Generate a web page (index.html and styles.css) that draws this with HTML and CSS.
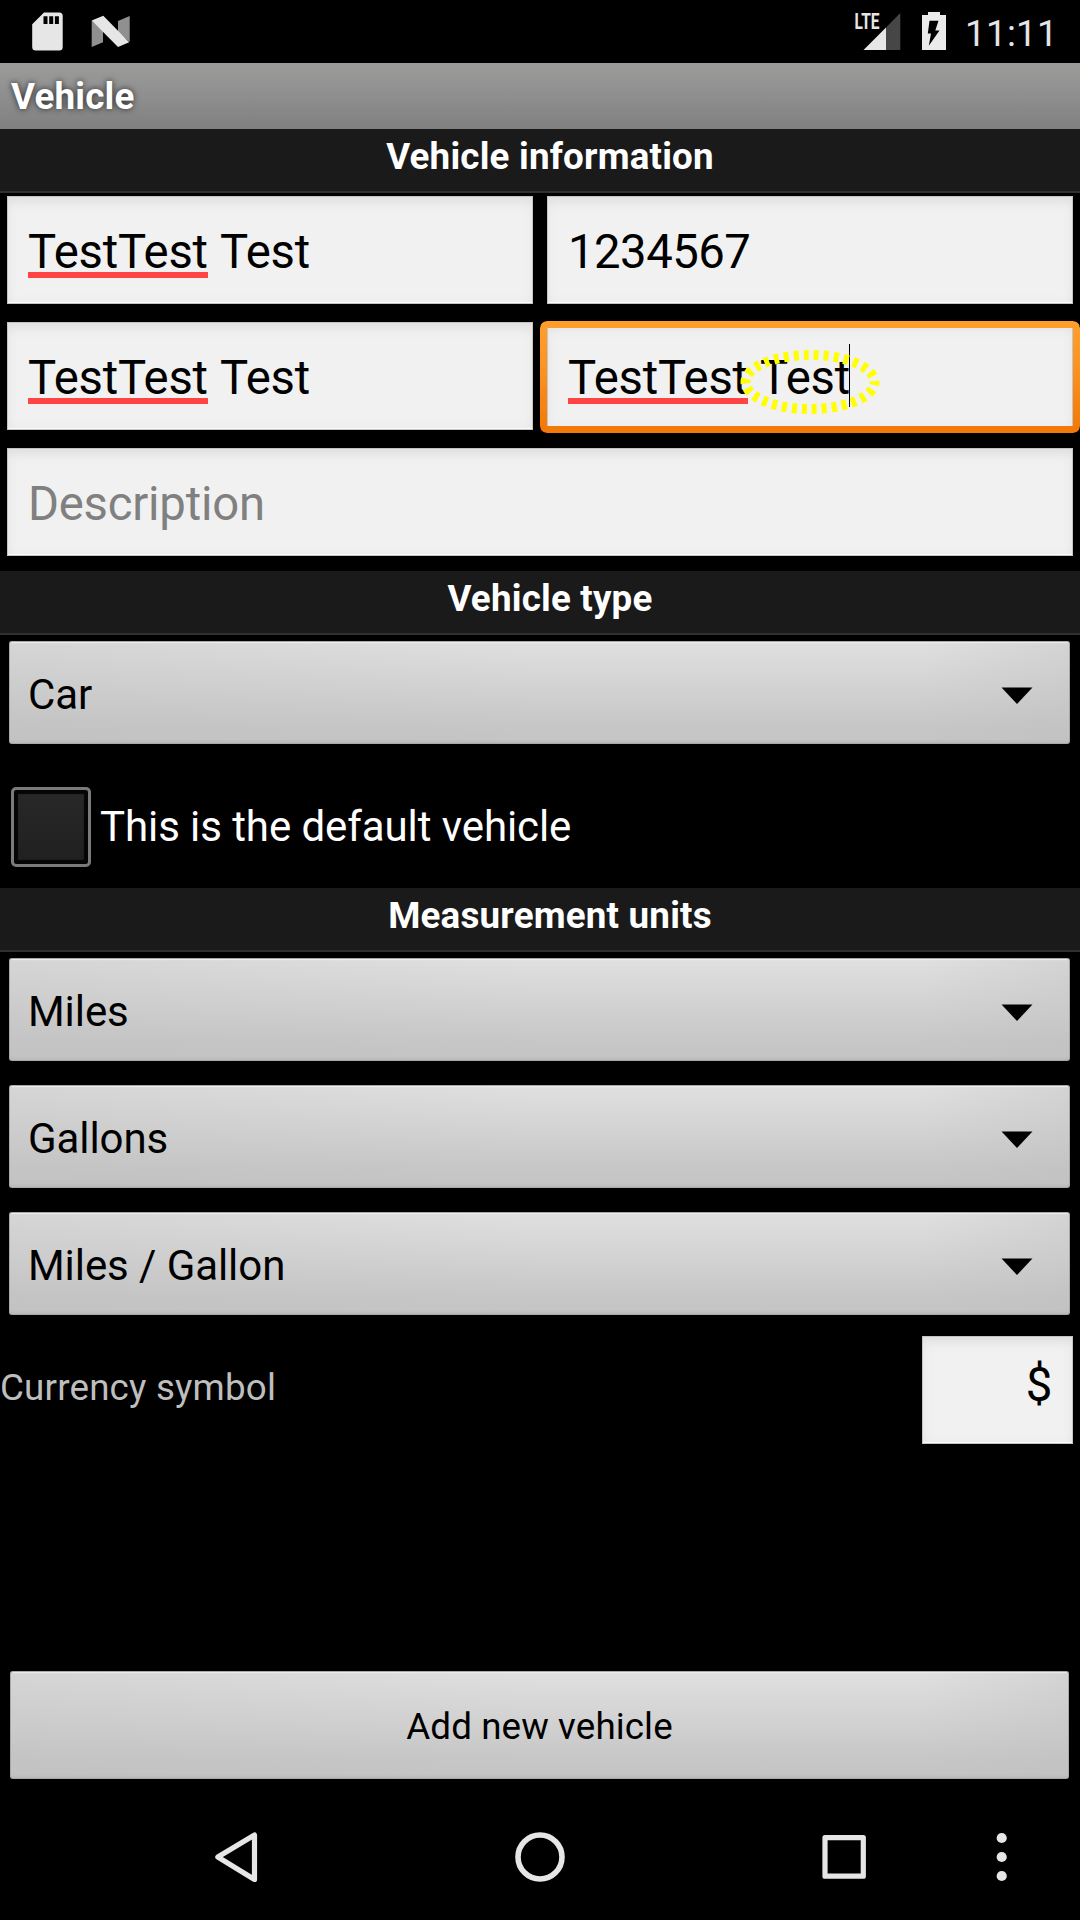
FILE: index.html
```html
<!DOCTYPE html>
<html lang="en">
<head>
<meta charset="utf-8">
<title>Vehicle</title>
<link rel="stylesheet" href="styles.css">
</head>
<body>
<div class="screen">
  <header class="status-bar">
    <svg class="status-icons" width="140" height="63" viewBox="0 0 140 63">
      <path fill="#e6e6e6" d="M44 12.5h15.200a3.500 3.500 0 0 1 3.500 3.500v31a3.500 3.500 0 0 1-3.500 3.500h-23.500a3.500 3.500 0 0 1-3.500-3.500v-22.800z"/>
      <path d="M43.500 16.300h4v7.700h-4zM49.200 16.300h4v7.700h-4zM54.900 16.300h4v7.700h-4z"/>
      <path fill="#909090" d="M91.700 20.500l11.300 10v11.700l-11.300 4.800zM118 21l11.700-5v26l-11.700-10z"/>
      <path fill="#e6e6e6" d="M91.700 20.500l11.600-4.700 25.900 26.400-11.200 4.800z"/>
    </svg>
    <svg class="status-icons" width="100" height="63" viewBox="850 0 100 63">
      <text class="lte" x="854.500" y="28.800" textLength="25" lengthAdjust="spacingAndGlyphs">LTE</text>
      <path fill="#464646" d="M886 27.500l14.300-14.500v37h-14.300z"/>
      <path fill="#e6e6e6" d="M863.500 50l22.500-22.500v22.500z"/>
      <path fill="#ebebeb" d="M928 12h12v3h6v35h-24v-35h6z"/>
      <path d="M929.500 20.800h9l-3.200 9.700h4.200l-10.700 15.200 2.200-12.200h-3.200z"/>
    </svg>
    <span class="clock">11:11</span>
  </header>
  <h1 class="title-bar">Vehicle</h1>
  <main class="form">
    <h2 class="section">Vehicle information</h2>
    <div class="fields">
      <div class="field"><span class="typo">TestTest</span> Test</div>
      <div class="field digits">1234567</div>
      <div class="field"><span class="typo">TestTest</span> Test</div>
      <div class="field focused"><span class="typo">TestTest</span> Test<i class="caret"></i>
        <svg class="mark" width="142" height="66" viewBox="0 0 142 66"><ellipse cx="71" cy="33" rx="64.500" ry="27"/></svg>
      </div>
      <div class="field wide hint">Description</div>
    </div>
    <h2 class="section">Vehicle type</h2>
    <div class="spinner">Car<svg width="32" height="18" viewBox="0 0 32 18"><path d="M.5.500h31l-15.500 16.500z"/></svg></div>
    <label class="check"><span class="box"></span>This is the default vehicle</label>
    <h2 class="section">Measurement units</h2>
    <div class="spinner">Miles<svg width="32" height="18" viewBox="0 0 32 18"><path d="M.5.500h31l-15.500 16.500z"/></svg></div>
    <div class="spinner">Gallons<svg width="32" height="18" viewBox="0 0 32 18"><path d="M.5.500h31l-15.500 16.500z"/></svg></div>
    <div class="spinner">Miles / Gallon<svg width="32" height="18" viewBox="0 0 32 18"><path d="M.5.500h31l-15.500 16.500z"/></svg></div>
    <div class="currency"><span>Currency symbol</span><div class="field symbol">$</div></div>
  </main>
  <div class="button">Add new vehicle</div>
  <nav class="nav-bar">
    <svg width="1080" height="126" viewBox="0 0 1080 126" fill="none" stroke="#e6e6e6" stroke-width="5.200" stroke-linejoin="round">
      <path d="M254.500 41v44.500l-36.700-22.500z"/>
      <circle cx="540" cy="63" r="22" stroke-width="5.600"/>
      <rect x="825" y="43.600" width="38.300" height="38.600"/>
      <g fill="#e6e6e6" stroke="none"><circle cx="1001.700" cy="44" r="5.100"/><circle cx="1001.700" cy="63" r="5.100"/><circle cx="1001.700" cy="82" r="5.100"/></g>
    </svg>
  </nav>
</div>
</body>
</html>
```

FILE: styles.css
```css
* { box-sizing: border-box; }

body {
  margin: 0;
  background: #000;
  font-family: Roboto, sans-serif;
  font-size: 36.75px;
}

h1, h2 { margin: 0; font-size: 36.75px; font-weight: 700; letter-spacing: 0.2px; color: #fff; }

.screen {
  display: flex;
  flex-direction: column;
  width: 1080px;
  height: 1920px;
  overflow: hidden;
  background: #000;
}

.status-bar {
  display: flex;
  flex: none;
  height: 63px;
}
.status-icons { display: block; flex: none; }
.status-icons + .status-icons { margin-left: 710px; }
.lte { font: 700 21.5px Roboto, sans-serif; fill: #e6e6e6; }
.clock { margin-left: 15px; line-height: 68px; letter-spacing: 0.3px; color: #e6e6e6; }

.title-bar {
  flex: none;
  height: 66px;
  padding-left: 11px;
  line-height: 67px;
  background: linear-gradient(#9b9b98, #949494 30%, #808080);
  text-shadow: 0 0 6px rgba(0, 0, 0, 0.75);
}

.form { flex: 1; }

.section {
  height: 64px;
  padding-left: 20px;
  line-height: 55px;
  text-align: center;
  background: #1a1a1a;
  border-bottom: 2px solid #303030;
}

.fields {
  display: grid;
  grid-template-columns: 526px 526px;
  gap: 18px 14px;
  padding: 3px 7px 15px;
}

.field {
  position: relative;
  height: 108px;
  padding: 2px 21px 0;
  line-height: 109px;
  font-size: 47.25px;
  letter-spacing: -0.22px;
  word-spacing: 1.6px;
  color: #000;
  white-space: nowrap;
  background: #f1f1f1;
  box-shadow: inset 0 0 0 1px #c4c4c4, inset 0 -3px 1px -1px #fcfcfc, inset 0 10px 12px -5px #dedede, inset 0 0 12px #e6e6e6;
}
.digits { letter-spacing: -0.5px; }
.wide { grid-column: 1 / 3; }
.hint { color: #808080; }

.typo { position: relative; }
.typo::after {
  content: "";
  position: absolute;
  left: 0;
  right: 0;
  top: 48px;
  height: 6px;
  background: #ff4444;
}

.focused::before {
  content: "";
  position: absolute;
  inset: -1px -7px -3px;
  border-radius: 7px;
  background: linear-gradient(#ff9e2b, #fb9626 35%, #f27706);
  clip-path: path(evenodd, "M7 0H533Q540 0 540 7V105Q540 112 533 112H7Q0 112 0 105V7Q0 0 7 0ZM7 7V105H533V7Z");
}
.caret {
  position: absolute;
  left: 302px;
  top: 22px;
  width: 1px;
  height: 63px;
  background: #000;
}
.mark {
  position: absolute;
  left: 192px;
  top: 27px;
  fill: none;
  stroke: #ff0;
  stroke-width: 10px;
  stroke-dasharray: 5 5;
  stroke-dashoffset: 2;
}

.spinner, .button {
  background:
    linear-gradient(90deg, rgba(190, 190, 190, 0.3), rgba(190, 190, 190, 0) 50%, rgba(190, 190, 190, 0) 86%, rgba(190, 190, 190, 0.35)),
    linear-gradient(#e0e0e0, #d4d4d4 40%, #c7c7c7 80%, #c4c4c4);
  border-radius: 3px;
  box-shadow: inset 0 0 0 1px #a8a8a8, inset 0 3px 1px -1px #eee, inset 0 -4px 2px -1px #bbb;
}
.spinner {
  display: flex;
  justify-content: space-between;
  align-items: center;
  height: 103px;
  margin: 6px 10px 24px 9px;
  padding: 4px 37px 0 19px;
  font-size: 42px;
  letter-spacing: -0.07px;
  color: #000;
}
.spinner + .spinner { margin-top: 0; }
.spinner svg { margin-top: 3px; }

.check {
  display: flex;
  align-items: center;
  gap: 9px;
  height: 121px;
  margin: -2px 0 1px;
  padding-left: 11px;
  font-size: 42px;
  letter-spacing: -0.08px;
  color: #fff;
}
.box {
  width: 80px;
  height: 80px;
  border: 3px solid #7a7a7a;
  border-radius: 5px;
  background: linear-gradient(#282828, #202020);
  box-shadow: inset 0 0 1px 4px #050505;
}

.currency {
  display: flex;
  justify-content: space-between;
  align-items: center;
  height: 108px;
  margin-top: -3px;
  padding-right: 7px;
  letter-spacing: 0.18px;
  color: #bebebe;
}
.currency span { margin-top: -5px; }
.symbol { width: 151px; line-height: 94px; text-align: right; }

.button {
  flex: none;
  height: 108px;
  margin: 0 11px 15px 10px;
  line-height: 112px;
  letter-spacing: 0.1px;
  text-align: center;
  color: #000;
}

.nav-bar { flex: none; height: 126px; }
.nav-bar svg { display: block; }
```
